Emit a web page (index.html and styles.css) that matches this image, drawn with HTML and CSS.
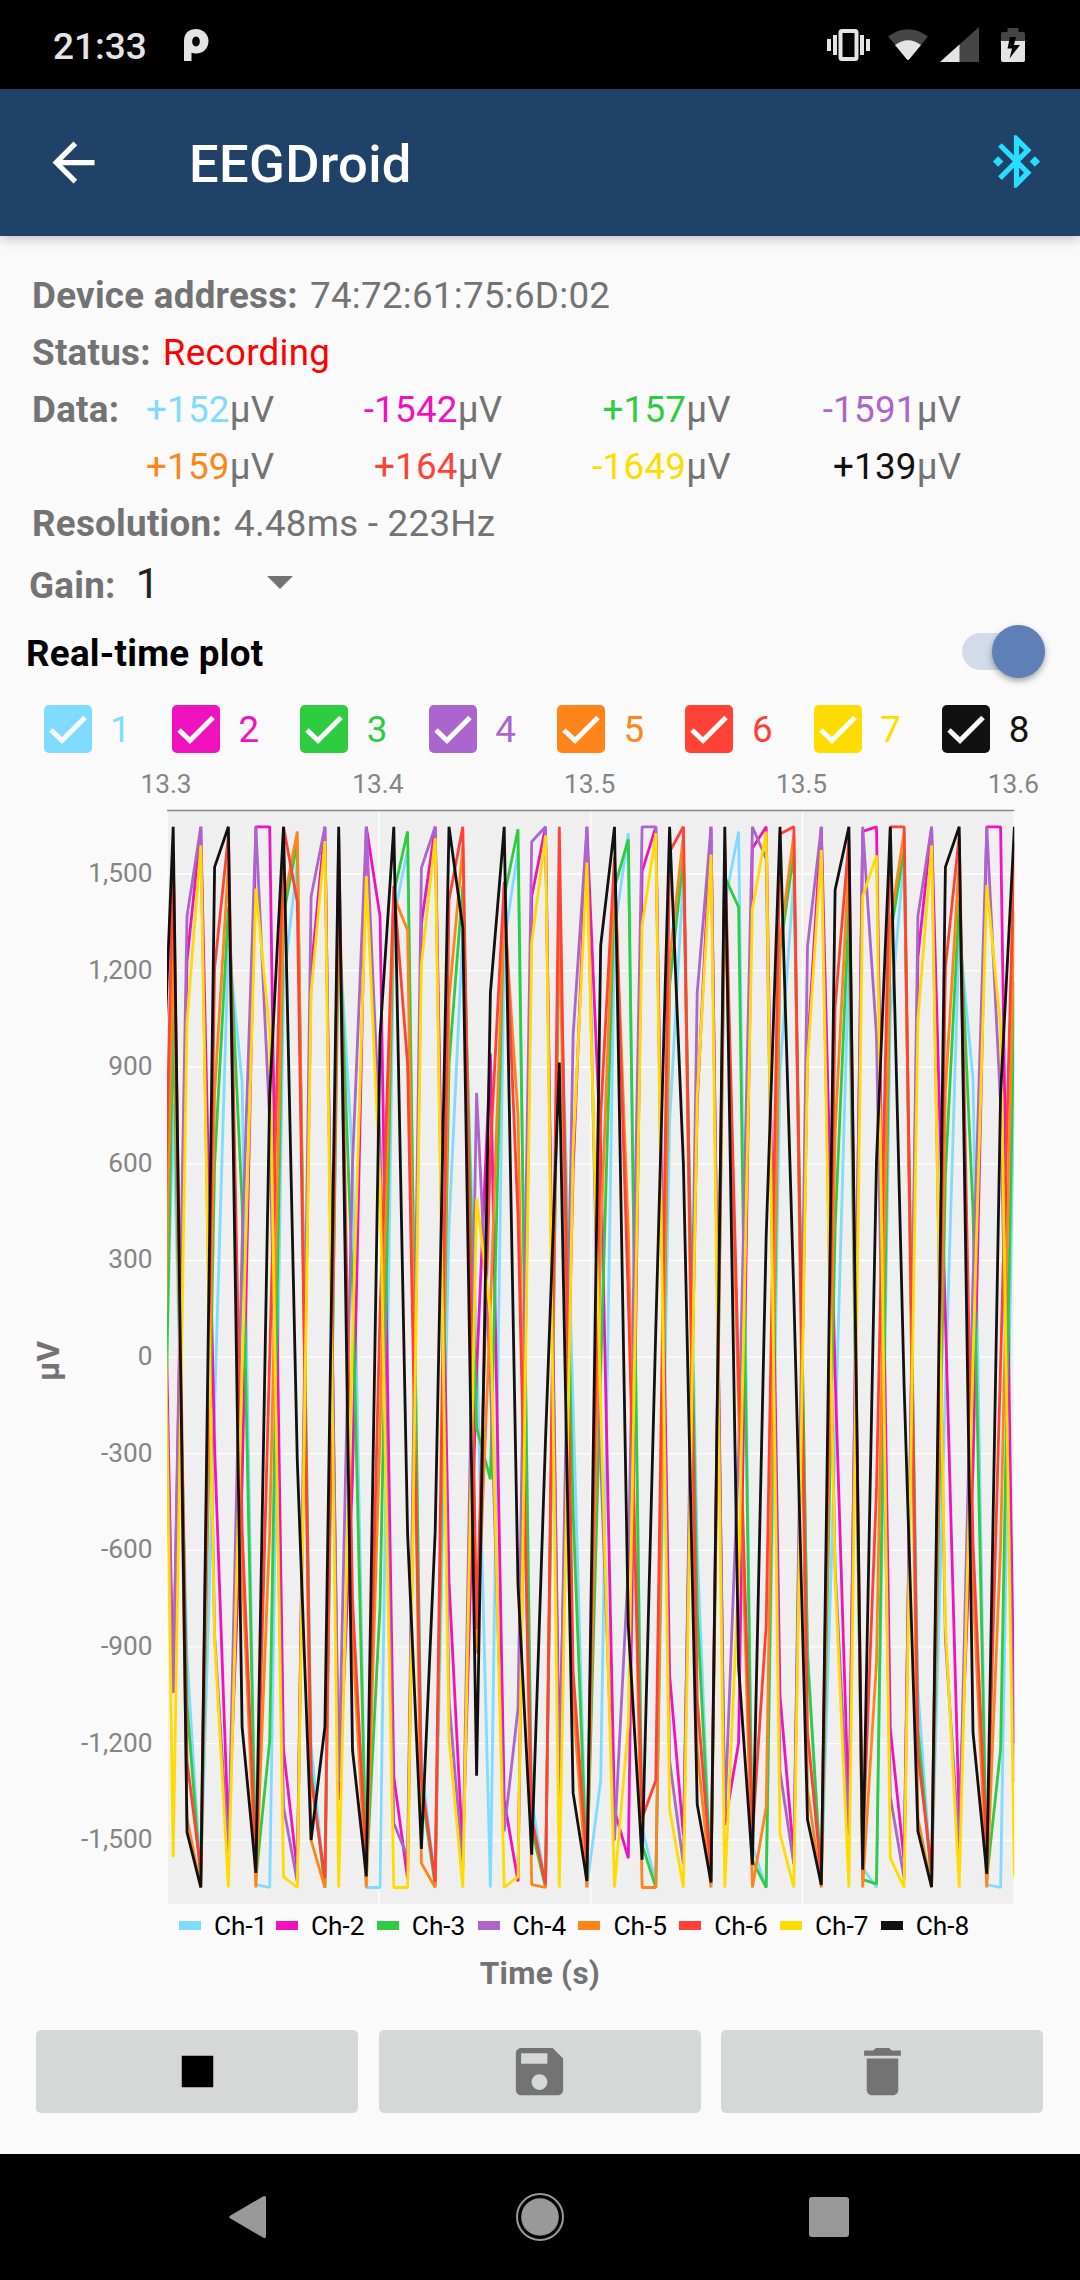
FILE: index.html
```html
<!DOCTYPE html>
<html lang="en">
<head>
<meta charset="utf-8">
<title>EEGDroid</title>
<link rel="stylesheet" href="styles.css">
</head>
<body>
<div class="screen">
  <header class="status-bar">
    <span class="clock">21:33</span>
    <svg class="pie" width="26" height="34" viewBox="0 0 26 34"><path fill-rule="evenodd" d="M1 33V13C1 5 6 1 13 1s12.500 5 12.500 12-5 12.500-12.500 12.500c-2 0-3.500-.3-4.500-.7V33zM13 8.500c-2.600 0-3.800 2.200-3.800 5s1.200 5 3.800 5 3.800-2.200 3.800-5-1.200-5-3.800-5z"/></svg>
    <span class="spacer"></span>
    <svg class="vibrate" width="43" height="34" viewBox="0 0 43 34"><path d="M0 11h4v12H0zM6 7h4v20H6zM33 7h4v20h-4zM39 11h4v12h-4z"/><rect x="13.500" y="3" width="16" height="28" rx="1.500" fill="none" stroke="#e4e4e4" stroke-width="4"/></svg>
    <svg class="wifi" width="40" height="34" viewBox="0 0 40 34"><path class="dim" d="M0 8.500Q20-6 40 8.500L20.500 32z"/><path d="M7 17q13-9.500 26 0L21 31.500q-1 1-2 0z"/></svg>
    <svg class="signal" width="39" height="35" viewBox="0 0 39 35"><path class="dim" d="M0 35L39 0v35z"/><path d="M0 35l19.500-17.500V35z"/></svg>
    <svg class="battery" width="24" height="34" viewBox="0 0 24 34"><path class="dim" d="M0 13V6q0-2 2-2h4.500V0h11v4H22q2 0 2 2v7z"/><path d="M0 13h24v19q0 2-2 2H2q-2 0-2-2z"/><path fill="#000" d="M9 9h6l-2 8h6L8.500 30.500 11 20.500H6.500z"/></svg>
  </header>

  <div class="app-bar">
    <svg class="icon" viewBox="0 0 24 24" fill="#fff"><path d="M20 11H7.830l5.590-5.590L12 4l-8 8 8 8 1.410-1.410L7.830 13H20v-2z"/></svg>
    <h1>EEGDroid</h1>
    <svg class="icon bluetooth" viewBox="0 0 24 24" fill="#26deff"><path d="M7 12l-2-2-2 2 2 2 2-2zm10.710-4.290L12 2h-1v7.590L6.410 5 5 6.410 10.590 12 5 17.590 6.410 19 11 14.410V22h1l5.710-5.710-4.300-4.290 4.300-4.290zM13 5.830l1.880 1.880L13 9.590V5.830zm1.880 10.460L13 18.170v-3.760l1.880 1.880zM19 10l-2 2 2 2 2-2-2-2z"/></svg>
  </div>

  <main>
    <section class="info">
      <p><b>Device address:</b><span>74:72:61:75:6D:02</span></p>
      <p><b>Status:</b><span class="recording">Recording</span></p>
      <div class="readings">
        <b>Data:</b>
        <span><i class="c1">+152</i>µV</span><span><i class="c2">-1542</i>µV</span><span><i class="c3">+157</i>µV</span><span><i class="c4">-1591</i>µV</span>
        <b></b>
        <span><i class="c5">+159</i>µV</span><span><i class="c6">+164</i>µV</span><span><i class="c7">-1649</i>µV</span><span><i class="c8">+139</i>µV</span>
      </div>
      <p><b>Resolution:</b><span>4.48ms - 223Hz</span></p>
    </section>
    <div class="gain"><b>Gain:</b><span>1</span><i class="caret"></i></div>
    <div class="toggle-row"><b>Real-time plot</b><div class="switch"><i class="thumb"></i></div></div>
    <div class="channels" id="channels"></div>
    <svg class="chart" id="chart" width="1080" height="1142" viewBox="0 770 1080 1142"></svg>
    <div class="legend" id="legend"></div>
    <div class="axis-title">Time (s)</div>
    <div class="actions">
      <button><svg class="icon" viewBox="0 0 24 24"><path d="M6 6h12v12H6z"/></svg></button>
      <button><svg class="icon" viewBox="0 0 24 24" fill="#737373"><path d="M17 3H5c-1.110 0-2 .9-2 2v14c0 1.100.89 2 2 2h14c1.100 0 2-.9 2-2V7l-4-4zm-5 16c-1.660 0-3-1.340-3-3s1.340-3 3-3 3 1.340 3 3-1.340 3-3 3zm3-10H5V5h10v4z"/></svg></button>
      <button><svg class="icon" viewBox="0 0 24 24" fill="#737373"><path d="M6 19c0 1.100.9 2 2 2h8c1.100 0 2-.9 2-2V7H6v12zM19 4h-3.500l-1-1h-5l-1 1H5v2h14V4z"/></svg></button>
    </div>
  </main>

  <nav class="nav-bar">
    <svg width="40" height="44" viewBox="0 0 40 44"><path d="M2.500 20.500L35 1.500q3-1.500 3 1.500v38q0 3-3 1.500L2.500 23.500q-2.500-1.500 0-3z"/></svg>
    <svg width="50" height="50" viewBox="0 0 50 50"><circle cx="26" cy="25" r="23" fill="none" stroke="#999" stroke-width="2"/><circle cx="26" cy="25" r="18.800"/></svg>
    <svg width="40" height="40" viewBox="0 0 40 40"><rect width="40" height="40" rx="3"/></svg>
  </nav>
</div>
<script src="chart.js"></script>
</body>
</html>
```
FILE: styles.css
```css
* { box-sizing: border-box; }
body { margin: 0; background: #fafafa; font-family: Roboto, "Liberation Sans", sans-serif; font-size: 36.75px; color: #737373; }
.screen { width: 1080px; height: 2280px; display: flex; flex-direction: column; overflow: hidden; }
i { font-style: normal; }
p { margin: 0; }
svg { display: block; flex: none; }
.icon { width: 63px; height: 63px; }

.status-bar { height: 89px; background: #000; display: flex; align-items: center; padding: 0 55px 0 53px; color: #e4e4e4; fill: #e4e4e4; }
.clock { font-size: 37px; font-weight: 500; line-height: 89px; position: relative; top: 2px; }
.pie { margin-left: 36px; }
.spacer { flex: 1; }
.wifi { margin-left: 18px; }
.signal { margin-left: 12px; }
.battery { margin-left: 22px; }
.dim { fill: #454545; }

.app-bar { height: 147px; flex: none; background: #214268; display: flex; align-items: center; padding: 0 32px 0 42px; box-shadow: 0 2px 12px rgba(0,0,0,.25); z-index: 1; }
.app-bar h1 { flex: 1; margin: 0 0 0 84px; font-size: 52.5px; line-height: 147px; font-weight: 500; letter-spacing: .35px; color: #fff; position: relative; top: 2px; }
.bluetooth { margin-bottom: 3px; }

main { height: 1918px; flex: none; letter-spacing: .26px; }
.info { padding: 31px 0 0 32px; line-height: 57px; }
.info p { display: flex; gap: 12px; }
.readings { display: grid; grid-template-columns: 88px 154.500px 228px 228.500px 230.500px; text-align: right; }
.readings b { text-align: left; }
.recording { color: #f00; }
.gain { height: 67px; display: flex; align-items: baseline; padding-left: 29px; line-height: 64px; }
.gain span { font-size: 42px; color: #212121; margin-left: 20px; width: 131px; }
.caret { border: 13px solid transparent; border-top-color: #737373; border-bottom: 0; align-self: center; position: relative; top: -3px; }
.toggle-row { height: 69px; display: flex; justify-content: space-between; align-items: center; padding: 0 35px 0 26px; color: #000; }
.switch { width: 83px; height: 37px; border-radius: 19px; background: #d1dbea; position: relative; top: -2px; }
.thumb { position: absolute; right: 0; top: -8px; width: 53px; height: 53px; border-radius: 50%; background: #5f7fb7; box-shadow: 0 3px 6px rgba(0,0,0,.35); }

.channels { height: 82px; display: grid; grid-template-columns: repeat(8, 128.400px); padding-left: 43.500px; align-items: center; }
.channel { display: flex; align-items: center; gap: 18.500px; line-height: 50px; }
.channel svg { width: 48px; height: 48px; }
.channel span { position: relative; top: 1px; }

.chart { letter-spacing: 0; }
.chart text { font-size: 26.250px; fill: #858585; }
.chart .y-title { font-size: 31.500px; font-weight: 700; fill: #737373; }
.chart polyline { fill: none; stroke-width: 2.800; stroke-linejoin: bevel; }

.legend { height: 29px; display: flex; padding-left: 179px; line-height: 29px; font-size: 26.250px; letter-spacing: 0; color: #000; }
.key { display: flex; align-items: center; gap: 13px; width: 100.800px; }
.key:first-child { width: 97px; }
.key i { width: 22px; height: 9px; position: relative; top: -1px; }
.axis-title { height: 65px; line-height: 66px; text-align: center; font-size: 31.500px; font-weight: 700; }
.actions { display: grid; grid-template-columns: repeat(3, 322px); column-gap: 20.500px; padding: 24px 0 0 36px; }
.actions button { height: 83px; padding: 0; border: 0; border-radius: 5px; background: #d6d8d7; display: flex; align-items: center; justify-content: center; }

.nav-bar { height: 126px; flex: none; background: #000; display: flex; align-items: center; justify-content: space-between; padding: 0 231px 0 228px; fill: #999; }

.c1 { color: #7fdbff; } .c2 { color: #f012be; } .c3 { color: #2ecc40; } .c4 { color: #aa66cc; }
.c5 { color: #ff851b; } .c6 { color: #ff4136; } .c7 { color: #ffdc00; } .c8 { color: #111111; }
```
FILE: chart.js
```js
const COLORS = ['#7fdbff', '#f012be', '#2ecc40', '#aa66cc', '#ff851b', '#ff4136', '#ffdc00', '#111111'];

// Raw samples per channel; 1560 is 0 µV and 270.5 counts are 300 µV, growing downwards.
const SAMPLES = [
  [2400,850,2400,3020,1700,400,790,3037,3045,520,170,2650,3045,350,1000,3045,3045,330,140,2700,3030,1195,370,1525,3045,400,140,2800,3040,350,1700,3045,2745,370,92,2880,3030,900,210,2100,3040,290,88,2930,3045,760,220,2380,3035,1800,430,2990,3045,600,160,2490,3035,1650,370,780,3037,3045,700],
  [500,2500,450,75,1813,2900,1910,75,75,2660,3000,480,75,2800,1900,75,325,2735,3020,345,75,2188,2950,1600,710,2800,3028,270,75,2700,1040,75,980,2830,2963,200,75,2450,2900,850,75,2870,2640,135,75,2508,2960,700,75,1608,2850,88,75,2600,2970,440,75,1450,2850,1870,75,75,2640],
  [2700,600,2530,3030,1020,300,1130,3020,2635,320,120,2720,3045,300,1350,3020,2260,260,88,2770,3040,740,240,1758,1902,270,82,2880,3045,300,1990,3020,1600,245,110,2925,3045,520,160,2270,3030,215,300,2970,3045,420,150,2400,3030,1200,300,3023,3035,380,140,2600,3030,1050,280,1150,3020,2658,510],
  [800,2500,325,75,2340,2950,1250,75,900,2820,3030,270,75,2750,1020,75,950,2865,2960,190,75,2520,2990,820,1620,2888,2545,117,75,2800,660,75,1850,2913,2150,75,75,2690,2980,540,75,2850,1830,75,165,2720,2980,410,75,2150,2900,75,660,2790,3020,325,75,2350,2940,1350,75,850,2750],
  [2400,350,2850,3045,820,180,2150,3045,2050,290,88,2913,3045,200,2350,3045,1775,270,365,2977,3045,560,130,2390,1430,300,882,3037,3045,250,2525,3045,1225,190,1208,3045,3045,450,100,2660,3045,250,1700,3045,2820,395,98,2770,3045,930,170,3045,2415,345,90,2850,3045,815,170,2200,3045,2090,307],
  [1900,150,2690,3000,470,100,2040,2980,1560,75,285,2740,3020,100,2240,2980,1440,240,740,2740,3030,280,75,2321,980,230,1165,2850,3037,75,2440,2980,880,160,1390,2850,2745,145,75,2520,3000,130,1615,2900,2310,95,75,2610,3010,580,110,2940,1930,75,75,2670,3000,470,100,2080,2960,1580,120],
  [300,2960,622,127,2350,3045,1600,248,650,3015,3045,540,115,3045,1500,213,1070,3045,3045,460,107,2630,3045,1115,1435,3045,3015,400,99,3045,980,175,1700,3045,2590,352,93,2825,3045,830,153,3045,2180,305,88,2895,3045,735,140,2175,3045,270,155,2963,3045,618,127,2310,3045,1570,238,638,3015],
  [1050,75,2890,3045,188,75,2595,3004,825,75,1850,2912,2595,75,2660,3014,662,75,2055,2937,2048,75,358,2732,540,75,2197,2953,1793,735,2780,3027,407,75,2312,2967,1482,75,1020,2812,3031,75,2426,2981,1220,75,1382,2855,3038,252,75,2995,1010,75,1640,2887,3044,188,75,2610,3007,822,75]
];

const LEFT = 167, RIGHT = 1014.3, TOP = 810.5, BOTTOM = 1904;
const x = k => (173.2 + 13.79 * (k - 1)).toFixed(1);
const y = v => (800 + v / 2.8).toFixed(1);

let out = `<defs><clipPath id="plot"><rect x="${LEFT}" y="${TOP}" width="${RIGHT - LEFT}" height="${BOTTOM - TOP}"/></clipPath></defs>
<rect x="${LEFT}" y="${TOP}" width="${RIGHT - LEFT}" height="${BOTTOM - TOP}" fill="#efefef"/>`;

['13.3', '13.4', '13.5', '13.5', '13.6'].forEach((label, i) => {
  const gx = LEFT + i * (RIGHT - LEFT) / 4;
  out += `<path d="M${gx} ${TOP}V${BOTTOM}" stroke="#fff" stroke-width="1.300"/><text x="${gx - 1}" y="792.500" text-anchor="middle">${label}</text>`;
});
for (let i = 5; i >= -5; i--) {
  const gy = 1357.1 - i * 96.62;
  out += `<path d="M${LEFT} ${gy}H${RIGHT}" stroke="#fff" stroke-width="1.300"/><text x="152.500" y="${gy + 8}" text-anchor="end">${(i * 300).toLocaleString('en-US')}</text>`;
}
out += `<path d="M${LEFT} ${TOP}H${RIGHT}" stroke="#868686" stroke-width="1.400"/><g clip-path="url(#plot)">`;
SAMPLES.forEach((s, c) => {
  out += `<polyline stroke="${COLORS[c]}" points="${s.map((v, k) => x(k) + ',' + y(v)).join(' ')}"/>`;
});
out += '</g><text class="y-title" transform="translate(59 1361) rotate(-90)" text-anchor="middle">µV</text>';
document.getElementById('chart').innerHTML = out;

document.getElementById('channels').innerHTML = COLORS.map((color, c) =>
  `<label class="channel"><svg viewBox="0 0 48 48"><rect width="48" height="48" rx="5" fill="${color}"/><path d="M7 25l11 10.500L41 12.500" fill="none" stroke="#fafafa" stroke-width="5"/></svg><span class="c${c + 1}">${c + 1}</span></label>`).join('');
document.getElementById('legend').innerHTML = COLORS.map((color, c) =>
  `<span class="key"><i style="background:${color}"></i>Ch-${c + 1}</span>`).join('');
```
